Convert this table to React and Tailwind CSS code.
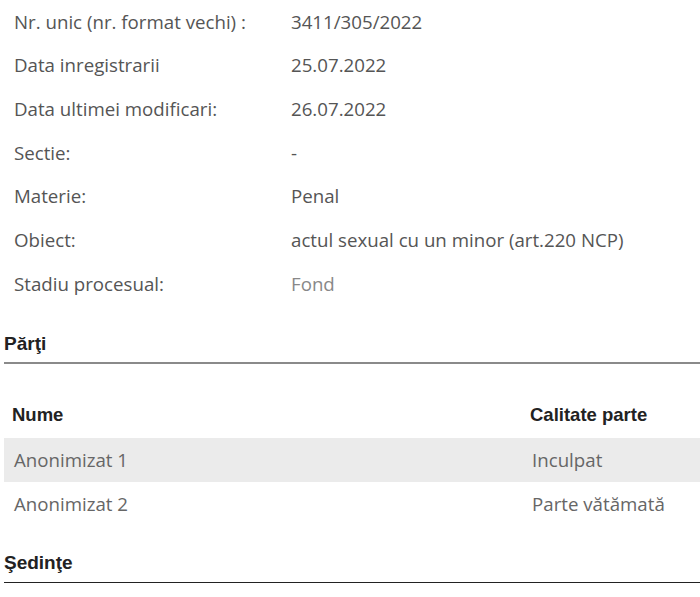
const details = [
  ["Nr. unic (nr. format vechi) :", "3411/305/2022"],
  ["Data inregistrarii", "25.07.2022"],
  ["Data ultimei modificari:", "26.07.2022"],
  ["Sectie:", "-"],
  ["Materie:", "Penal"],
  ["Obiect:", "actul sexual cu un minor (art.220 NCP)"],
  ["Stadiu procesual:", "Fond", true],
];

const parti = [
  ["Anonimizat 1", "Inculpat"],
  ["Anonimizat 2", "Parte vătămată"],
];

export default function App() {
  return (
    <div className="w-[700px] h-[597px] bg-white overflow-hidden font-['Open_Sans',sans-serif]">
      {/* detalii dosar */}
      <div className="flex flex-col">
        {details.map(([label, value, light]) => (
          <div key={label} className="flex items-center h-[43.67px] text-[18.7px] text-[#555]">
            <div className="w-[291px] pl-[14px]">{label}</div>
            <div className={light ? "text-[#888]" : ""}>{value}</div>
          </div>
        ))}
      </div>

      {/* parti */}
      <div className="mt-[27px] ml-[4px]">
        <h3 className="font-['Liberation_Sans',sans-serif] font-bold text-[19px] text-[#222] leading-[22px] pb-[7px] border-b-2 border-[#8a8a8a]">
          Părţi
        </h3>
        <table className="w-full table-fixed mt-[28px] text-[18.7px]">
          <colgroup>
            <col className="w-[526px]" />
            <col className="w-[170px]" />
          </colgroup>
          <thead>
            <tr className="h-[46px] font-['Liberation_Sans',sans-serif] text-[#222]">
              <th className="text-left font-bold pl-[8px] text-[18.5px]">Nume</th>
              <th className="text-left font-bold text-[18.5px]">Calitate parte</th>
            </tr>
          </thead>
          <tbody className="text-[#666]">
            {parti.map(([nume, calitate], i) => (
              <tr key={nume} className={`h-[44px] ${i === 0 ? "bg-[#ebebeb]" : ""}`}>
                <td className="pl-[10px]">{nume}</td>
                <td className="pl-[2px]">{calitate}</td>
              </tr>
            ))}
          </tbody>
        </table>
      </div>

      {/* sedinte */}
      <div className="mt-[26px] ml-[4px]">
        <h3 className="font-['Liberation_Sans',sans-serif] font-bold text-[19px] text-[#222] leading-[22px] pb-[8px] border-b border-[#222]">
          Şedinţe
        </h3>
      </div>
    </div>
  );
}
